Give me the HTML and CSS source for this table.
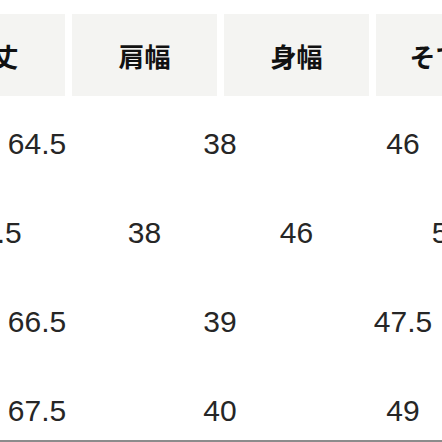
FILE: index.html
```html
<!DOCTYPE html>
<html lang="ja">
<head>
<meta charset="utf-8">
<link rel="stylesheet" href="styles.css">
</head>
<body>
<div class="table">
  <div class="row narrow head">
    <div class="cell">着丈</div>
    <div class="cell">肩幅</div>
    <div class="cell">身幅</div>
    <div class="cell">そで丈</div>
  </div>
  <div class="row wide">
    <div class="cell">64.5</div>
    <div class="cell">38</div>
    <div class="cell">46</div>
  </div>
  <div class="row narrow">
    <div class="cell">65.5</div>
    <div class="cell">38</div>
    <div class="cell">46</div>
    <div class="cell">58</div>
  </div>
  <div class="row wide">
    <div class="cell">66.5</div>
    <div class="cell">39</div>
    <div class="cell">47.5</div>
  </div>
  <div class="row wide">
    <div class="cell">67.5</div>
    <div class="cell">40</div>
    <div class="cell">49</div>
  </div>
</div>
</body>
</html>
```
FILE: styles.css
```css
html, body {
  margin: 0;
  padding: 0;
  background: #ffffff;
}
.table {
  width: 442px;
  height: 442px;
  box-sizing: border-box;
  overflow: hidden;
  padding-top: 14px;
  border-bottom: 2px solid #8c8c8c;
  display: flex;
  flex-direction: column;
  gap: 7px;
}
.row {
  display: grid;
  gap: 7px;
  height: 82px;
  flex: none;
}
.narrow {
  grid-template-columns: repeat(4, 145px);
  margin-left: -80px;
}
.wide {
  grid-template-columns: repeat(3, 176px);
  margin-left: -51px;
}
.cell {
  display: flex;
  align-items: center;
  justify-content: center;
  white-space: nowrap;
  font-family: "Liberation Sans", Arial, sans-serif;
  font-size: 30px;
  color: #262626;
}
.head .cell {
  background: #f4f4f2;
  font-family: "Noto Sans CJK JP", "Noto Sans", sans-serif;
  font-weight: 700;
  font-size: 26px;
  color: #111111;
}
```
